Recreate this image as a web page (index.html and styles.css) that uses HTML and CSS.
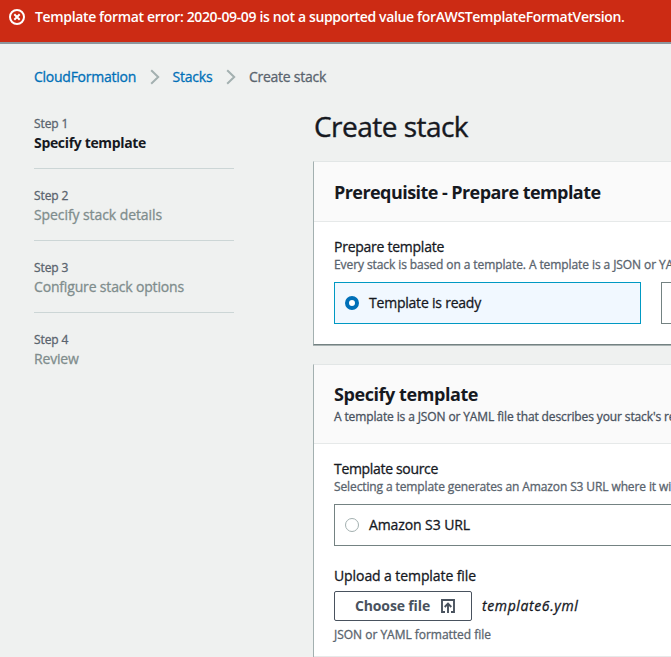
FILE: index.html
```html
<!DOCTYPE html>
<html lang="en">
<head>
<meta charset="utf-8">
<title>Create stack</title>
<link rel="stylesheet" href="styles.css">
</head>
<body>
<div class="flash" role="alert">
  <svg class="flash-icon" viewBox="0 0 16 16" aria-hidden="true"><circle cx="8" cy="8" r="7"/><path d="M5.3 5.3l5.4 5.4M10.7 5.3l-5.4 5.4"/></svg>
  <span>Template format error: 2020-09-09 is not a supported value forAWSTemplateFormatVersion.</span>
</div>
<nav class="breadcrumbs">
  <a class="crumb crumb-root" href="#">CloudFormation</a>
  <svg class="chevron" viewBox="0 0 10 16" aria-hidden="true"><path d="M1.2 1.2L8.2 8l-7 6.8"/></svg>
  <a class="crumb crumb-stacks" href="#">Stacks</a>
  <svg class="chevron" viewBox="0 0 10 16" aria-hidden="true"><path d="M1.2 1.2L8.2 8l-7 6.8"/></svg>
  <span class="crumb crumb-current">Create stack</span>
</nav>
<div class="layout">
  <ol class="steps">
    <li class="step"><span class="step-number">Step 1</span><span class="step-name active">Specify template</span></li>
    <li class="step"><span class="step-number">Step 2</span><span class="step-name details">Specify stack details</span></li>
    <li class="step"><span class="step-number">Step 3</span><span class="step-name">Configure stack options</span></li>
    <li class="step"><span class="step-number">Step 4</span><span class="step-name">Review</span></li>
  </ol>
  <main class="content">
    <h1>Create stack</h1>
    <section class="panel">
      <header class="panel-header"><h2 class="wide-title">Prerequisite - Prepare template</h2></header>
      <div class="panel-body">
        <div class="label">Prepare template</div>
        <div class="hint">Every stack is based on a template. A template is a JSON or YAML</div>
        <div class="tiles">
          <div class="tile selected"><span class="radio"></span><span class="tile-label">Template is ready</span></div>
          <div class="tile"></div>
        </div>
      </div>
    </section>
    <section class="panel">
      <header class="panel-header tall"><h2>Specify template</h2><p>A template is a JSON or YAML file that describes your stack's re</p></header>
      <div class="panel-body upload-body">
        <div class="label source">Template source</div>
        <div class="hint source-hint">Selecting a template generates an Amazon S3 URL where it will</div>
        <div class="tiles">
          <div class="tile url"><span class="radio"></span><span class="tile-label s3">Amazon S3 URL</span></div>
        </div>
        <div class="label upload">Upload a template file</div>
        <div class="file-row">
          <button class="choose" type="button"><span>Choose file</span><svg class="upload-icon" viewBox="0 0 16 16" aria-hidden="true"><path d="M5 14H2V2h12v12h-3M8 15V6M4.7 9L8 5.7 11.3 9"/></svg></button>
          <span class="file-name">template6.yml</span>
        </div>
        <div class="constraint">JSON or YAML formatted file</div>
      </div>
      <footer class="panel-footer"></footer>
    </section>
  </main>
</div>
</body>
</html>
```

FILE: styles.css
```css
* { box-sizing: border-box; }
html { overflow: hidden; }
body {
  display: flex;
  flex-direction: column;
  margin: 0;
  height: 657px;
  overflow: hidden;
  background: #eff1f0;
  color: #16191f;
  font: 500 14px/20px "Open Sans", "Noto Sans", sans-serif;
  -webkit-text-stroke: 0.3px;
}
h1, h2, p { margin: 0; }

.flash {
  display: flex;
  flex: none;
  align-items: flex-start;
  gap: 10px;
  height: 44px;
  padding: 7px 9px 0;
  background: #cc2b14;
  border-bottom: 2px solid #8c979e;
  color: #fff;
  font-weight: 600;
  letter-spacing: -0.355px;
  white-space: nowrap;
  -webkit-text-stroke: 0;
}
.flash-icon {
  flex: none;
  width: 16px;
  height: 16px;
  margin-top: 2px;
  fill: none;
  stroke: #fff;
  stroke-width: 2;
}

.breadcrumbs {
  display: flex;
  flex: none;
  align-items: center;
  height: 20px;
  margin: 23px 0 0 34px;
}
.crumb { color: #0070b8; text-decoration: none; white-space: nowrap; }
.crumb-root { width: 102px; letter-spacing: -0.255px; }
.crumb-stacks { width: 41px; letter-spacing: -0.197px; }
.crumb-current { color: #5a646e; letter-spacing: -0.264px; }
.chevron {
  flex: none;
  width: 10px;
  height: 16px;
  margin: 0 12px 0 14px;
  fill: none;
  stroke: #a3b0b0;
  stroke-width: 2;
}
.crumb-root + .chevron { margin-right: 12.5px; }
.crumb-stacks + .chevron { margin: 0 13px 0 12.5px; }

.layout {
  display: grid;
  flex: 1;
  grid-template-columns: 200px 1fr;
  column-gap: 79px;
  min-height: 0;
  margin-left: 34px;
}
.steps { list-style: none; margin: 27px 0 0; padding: 0; }
.step + .step { border-top: 1px solid #ccd6d6; height: 72px; padding-top: 17px; }
.step:first-child { height: 54px; }
.step span { display: block; white-space: nowrap; }
.step-number {
  color: #5a646e;
  font-size: 12px;
  line-height: 19px;
  letter-spacing: -0.1px;
}
.step-name { color: #7f8d8d; letter-spacing: -0.166px; }
.step-name.details { letter-spacing: -0.085px; }
.step-name.active {
  color: #16191f;
  font-weight: 700;
  letter-spacing: -0.335px;
  -webkit-text-stroke: 0;
}

.content { min-width: 0; overflow: hidden; }
h1 {
  margin: 21px 0 17px 1px;
  font-size: 28px;
  line-height: 36px;
  font-weight: 400;
  letter-spacing: -0.529px;
  -webkit-text-stroke: 0.4px;
}
.panel {
  margin-bottom: 18px;
  background: #fff;
  border-top: 1px solid #e2e6e6;
  border-left: 1px solid #a3b0b0;
  border-bottom: 1px solid #748282;
  box-shadow: 0 1px 0 #a9b3b3, -1px 0 0 #dde1e1;
}
.panel + .panel { margin-top: 19px; }
.panel-header {
  height: 60px;
  padding: 19px 0 0 20px;
  background: #fafafa;
  border-bottom: 1px solid #e6e9e9;
}
.panel-header.tall { height: 79px; padding-top: 18px; }
.panel-header h2 {
  font-size: 18px;
  line-height: 22px;
  font-weight: 700;
  letter-spacing: -0.431px;
  -webkit-text-stroke: 0;
}
.panel-header .wide-title { letter-spacing: -0.56px; }
.panel-header p {
  color: #49525e;
  font-size: 12px;
  line-height: 22px;
  margin-top: 1px;
  letter-spacing: -0.121px;
  white-space: nowrap;
}
.panel-body { padding: 15px 0 20px 20px; }
.label { letter-spacing: -0.257px; }
.source { letter-spacing: -0.325px; }
.upload { margin-top: 20px; letter-spacing: -0.088px; }
.hint {
  color: #5a646e;
  font-size: 12px;
  line-height: 16px;
  letter-spacing: -0.086px;
  white-space: nowrap;
}
.source-hint { letter-spacing: -0.114px; }
.tiles { display: flex; gap: 20px; margin-top: 9px; }
.tile {
  display: flex;
  align-items: center;
  flex: none;
  width: 307px;
  height: 42px;
  padding: 0 10px;
  border: 1px solid #748282;
}
.tile.url { width: 420px; }
.tile.selected { background: #f1f8ff; border-color: #0099c3; }
.radio {
  width: 14px;
  height: 14px;
  margin-right: 10px;
  border: 1px solid #a3b0b0;
  border-radius: 50%;
  background: #fff;
}
.selected .radio { border: 4px solid #0070b8; }
.tile-label { letter-spacing: -0.217px; }
.s3 { letter-spacing: -0.098px; }
.file-row { display: flex; align-items: center; gap: 10px; margin-top: 5px; }
.choose {
  display: flex;
  align-items: center;
  gap: 10px;
  width: 138px;
  height: 30px;
  padding: 0 0 0 20px;
  background: #fff;
  border: 1px solid #49525e;
  border-radius: 2px;
  color: #49525e;
  font: 700 14px/20px "Open Sans", "Noto Sans", sans-serif;
  letter-spacing: -0.141px;
  -webkit-text-stroke: 0;
}
.upload-icon {
  width: 16px;
  height: 16px;
  fill: none;
  stroke: #49525e;
  stroke-width: 1.9;
}
.file-name { font-style: italic; letter-spacing: 0.62px; }
.constraint {
  margin-top: 6px;
  color: #5a646e;
  font-size: 12px;
  line-height: 16px;
  letter-spacing: -0.019px;
}
.panel-body.upload-body { padding-bottom: 13px; }
.panel-footer { height: 1px; background: #e6e9e9; }
```
